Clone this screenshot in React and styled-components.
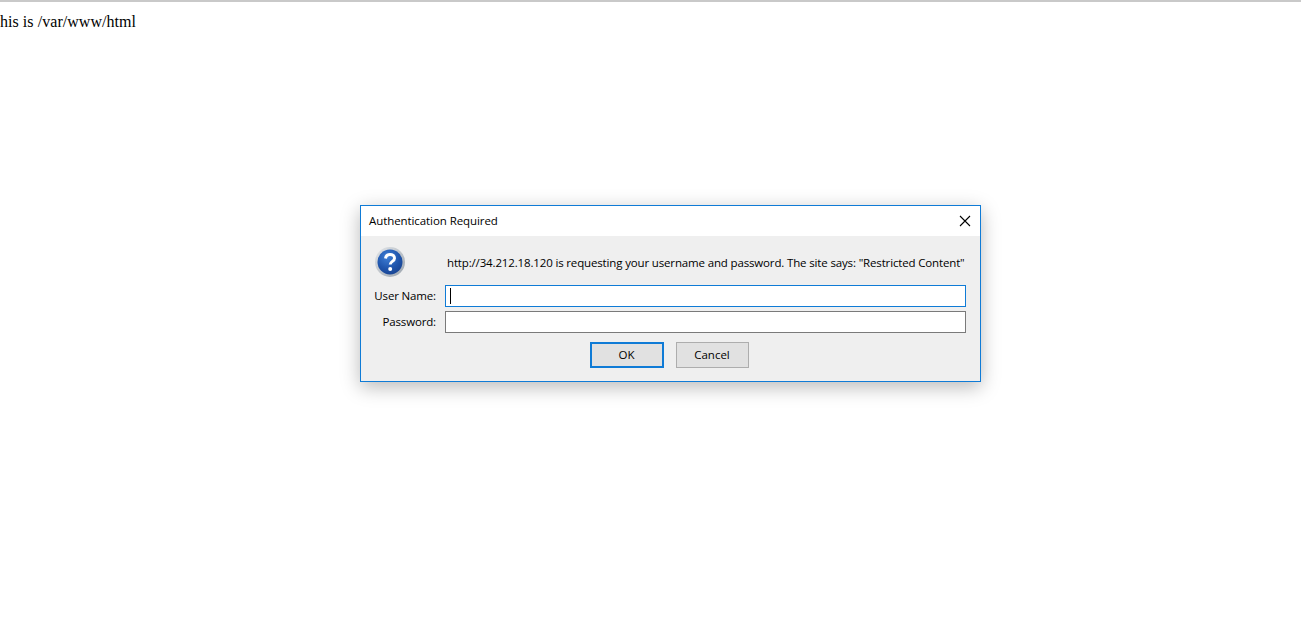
import React from 'react';
import styled, { createGlobalStyle } from 'styled-components';

const GlobalStyle = createGlobalStyle`
  html, body { margin: 0; padding: 0; background: #fff; }
  body { overflow: hidden; }
`;

const Page = styled.div`
  height: 619px;
  display: flex;
  flex-direction: column;
`;

const TopRule = styled.div`
  height: 2px;
  background: #c9c9c9;
  flex: none;
`;

const PageText = styled.div`
  font-family: "Liberation Serif", serif;
  font-size: 16px;
  line-height: 18px;
  letter-spacing: 0.05px;
  color: #000;
  margin-top: 11px;
`;

const Dialog = styled.div`
  align-self: flex-start;
  margin: 174px 0 0 360px;
  width: 621px;
  box-sizing: border-box;
  border: 1px solid #0f7bd6;
  background: #efefef;
  box-shadow: 0 5px 18px rgba(0, 0, 0, 0.28);
  font-family: "Open Sans", sans-serif;
  font-size: 11.5px;
  color: #000;
`;

const TitleBar = styled.div`
  height: 30px;
  background: #fff;
  display: flex;
  align-items: center;
  justify-content: space-between;
  padding: 0 9px 0 8px;
`;

const Title = styled.span`
  letter-spacing: -0.08px;
  margin-top: -2px;
`;

const DialogBody = styled.div`
  padding: 10px 14px 13px 13px;
`;

const MessageRow = styled.div`
  display: flex;
  align-items: center;
  height: 32px;
  margin-bottom: 7px;
`;

const IconSlot = styled.div`
  width: 32px;
  height: 32px;
  flex: none;
`;

const Message = styled.div`
  margin-left: 41px;
  white-space: nowrap;
  letter-spacing: -0.15px;
`;

const Fields = styled.div`
  display: grid;
  grid-template-columns: 62px 1fr;
  column-gap: 9px;
  row-gap: 4px;
`;

const Label = styled.label`
  text-align: right;
  line-height: 21px;
  white-space: nowrap;
  letter-spacing: -0.15px;
`;

const FieldBox = styled.div`
  height: 22px;
  box-sizing: border-box;
  background: #fff;
  border: 1px solid ${(p) => (p.$focused ? '#0f7bd6' : '#7a7a7a')};
  display: flex;
  align-items: center;
  padding-left: 4px;
`;

const Caret = styled.div`
  width: 1px;
  height: 16px;
  background: #000;
`;

const Buttons = styled.div`
  display: flex;
  justify-content: center;
  gap: 12px;
  margin-top: 9px;
  padding-right: 2px;
`;

const Button = styled.div`
  width: ${(p) => (p.$primary ? '74px' : '73px')};
  height: 26px;
  box-sizing: border-box;
  background: #e1e1e1;
  border: ${(p) => (p.$primary ? '2px solid #0f7bd6' : '1px solid #adadad')};
  display: flex;
  align-items: center;
  justify-content: center;
  padding-bottom: 1px;
`;

const CloseIcon = () => (
  <svg width="12" height="12" viewBox="0 0 12 12">
    <path d="M1 1L11 11M11 1L1 11" stroke="#000" strokeWidth="1.1" fill="none" />
  </svg>
);

const QuestionIcon = () => (
  <svg width="32" height="32" viewBox="0 0 32 32">
    <defs>
      <linearGradient id="ring" x1="0" y1="0" x2="1" y2="1">
        <stop offset="0" stopColor="#e4e7ea" />
        <stop offset="1" stopColor="#9aa3ad" />
      </linearGradient>
      <radialGradient id="ball" cx="0.4" cy="0.3" r="0.8">
        <stop offset="0" stopColor="#3f7fd6" />
        <stop offset="0.6" stopColor="#1f54ab" />
        <stop offset="1" stopColor="#17408c" />
      </radialGradient>
    </defs>
    <circle cx="16" cy="16" r="15" fill="url(#ring)" />
    <circle cx="16" cy="16" r="12.5" fill="url(#ball)" />
    <path
      d="M11.5 12.5C11.8 9.8 13.6 8.5 16 8.5C18.6 8.5 20.5 10 20.5 12.2C20.5 15.4 16.2 15.3 16.2 18.6"
      stroke="#fff"
      strokeWidth="3"
      fill="none"
    />
    <circle cx="16.2" cy="23" r="2" fill="#fff" />
  </svg>
);

export default function App() {
  return (
    <Page>
      <GlobalStyle />
      <TopRule />
      <PageText>his is /var/www/html</PageText>
      <Dialog>
        <TitleBar>
          <Title>Authentication Required</Title>
          <CloseIcon />
        </TitleBar>
        <DialogBody>
          <MessageRow>
            <IconSlot>
              <QuestionIcon />
            </IconSlot>
            <Message>
              http://34.212.18.120 is requesting your username and password. The site says: "Restricted Content"
            </Message>
          </MessageRow>
          <Fields>
            <Label>User Name:</Label>
            <FieldBox $focused>
              <Caret />
            </FieldBox>
            <Label>Password:</Label>
            <FieldBox />
          </Fields>
          <Buttons>
            <Button $primary>OK</Button>
            <Button>Cancel</Button>
          </Buttons>
        </DialogBody>
      </Dialog>
    </Page>
  );
}
